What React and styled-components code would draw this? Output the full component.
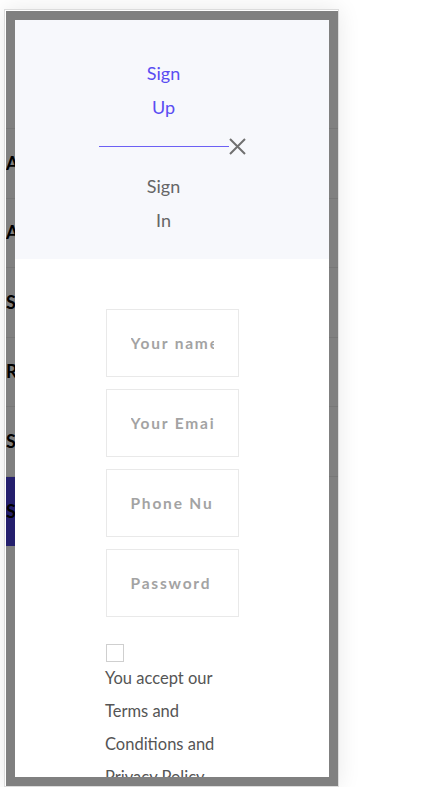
import React from 'react'
import styled, { createGlobalStyle } from 'styled-components'

const GlobalStyle = createGlobalStyle`
  * {
    box-sizing: border-box;
  }
  body {
    margin: 0;
    background: #fff;
    font-family: Lato, 'Liberation Sans', sans-serif;
  }
`

const Frame = styled.div`
  width: 335px;
  margin: 9px 0 0 4px;
  padding: 1px 0 0 1px;
  border: 1px solid #dcdcdc;
  background: #fff;
  box-shadow: 0 0 22px rgba(0, 0, 0, 0.09);
`

const Stage = styled.div`
  display: grid;
  width: 332px;
  height: 775px;
  background: #808080;
`

const Menu = styled.ul`
  grid-area: 1 / 1;
  margin: 0;
  padding: 117px 0 0;
  list-style: none;
`

const MenuItem = styled.li`
  display: flex;
  height: 70px;
  margin-bottom: -0.4px;
  border-top: 1px solid rgba(0, 0, 0, 0.07);
`

const MenuLink = styled.a`
  display: flex;
  align-items: center;
  width: 220px;
  padding-bottom: 2px;
  background: ${props => (props.active ? '#241f6d' : 'transparent')};
  color: #000;
  font-size: 18px;
  font-weight: 700;
  text-decoration: none;
  white-space: nowrap;
  overflow: hidden;
`

const Modal = styled.div`
  grid-area: 1 / 1;
  display: flex;
  flex-direction: column;
  margin: 9px;
  background: #fff;
  overflow: hidden;
`

const Header = styled.div`
  display: flex;
  justify-content: center;
  align-items: center;
  padding: 36px 0 22px;
  background: #f7f8fc;
`

const Tabs = styled.div`
  display: flex;
  flex-direction: column;
  width: 130px;
`

const Tab = styled.button`
  display: flex;
  justify-content: center;
  padding: ${props => (props.active ? '0 0 22px' : '22px 0 0')};
  border: none;
  border-bottom: ${props => (props.active ? '1px solid #6c60f4' : 'none')};
  background: none;
  color: ${props => (props.active ? '#5a4df2' : '#666')};
  font-family: inherit;
  font-size: 18px;
  line-height: 34px;
  cursor: pointer;
`

const TabLabel = styled.span`
  width: 48px;
  text-align: center;
`

const Close = styled.button`
  display: flex;
  padding: 0;
  border: none;
  background: none;
  cursor: pointer;
`

const Form = styled.form`
  display: flex;
  flex-direction: column;
  align-items: center;
  gap: 12px;
  padding-top: 50px;
`

const Field = styled.input`
  width: 133px;
  height: 68px;
  padding: 0 24px;
  border: 1px solid #e9e9e9;
  outline: none;
  font-family: inherit;
  font-size: 15.5px;
  font-weight: 700;
  letter-spacing: 1.8px;
  color: #333;

  &::placeholder {
    color: #a3a3a3;
  }
`

const Consent = styled.label`
  display: flex;
  flex-direction: column;
  align-items: flex-start;
  width: 134px;
  margin-top: 15px;
`

const Check = styled.input`
  appearance: none;
  width: 18px;
  height: 18px;
  margin: 0 0 0 1px;
  border: 1px solid #cfcfcf;
  background: #fff;
`

const ConsentText = styled.p`
  margin: 0;
  color: #555;
  font-size: 16.5px;
  line-height: 33px;
`

const menu = ['About', 'Account', 'Services', 'Resources', 'Support', 'Sign Up']

function CloseIcon () {
  return (
    <svg width='17' height='17' viewBox='0 0 17 17'>
      <path d='M1 1L16 16M16 1L1 16' stroke='#707070' strokeWidth='2' />
    </svg>
  )
}

export default function App () {
  return (
    <>
      <GlobalStyle />
      <Frame>
        <Stage>
          <Menu>
            {menu.map((item, i) => (
              <MenuItem key={item}>
                <MenuLink href='#' active={i === menu.length - 1}>{item}</MenuLink>
              </MenuItem>
            ))}
          </Menu>
          <Modal>
            <Header>
              <Tabs>
                <Tab active><TabLabel>Sign Up</TabLabel></Tab>
                <Tab><TabLabel>Sign In</TabLabel></Tab>
              </Tabs>
              <Close aria-label='Close'><CloseIcon /></Close>
            </Header>
            <Form onSubmit={e => e.preventDefault()}>
              <Field type='text' placeholder='Your name' />
              <Field type='email' placeholder='Your Email' />
              <Field type='tel' placeholder='Phone Number' />
              <Field type='password' placeholder='Password' />
              <Consent>
                <Check type='checkbox' />
                <ConsentText>You accept our Terms and Conditions and Privacy Policy</ConsentText>
              </Consent>
            </Form>
          </Modal>
        </Stage>
      </Frame>
    </>
  )
}
